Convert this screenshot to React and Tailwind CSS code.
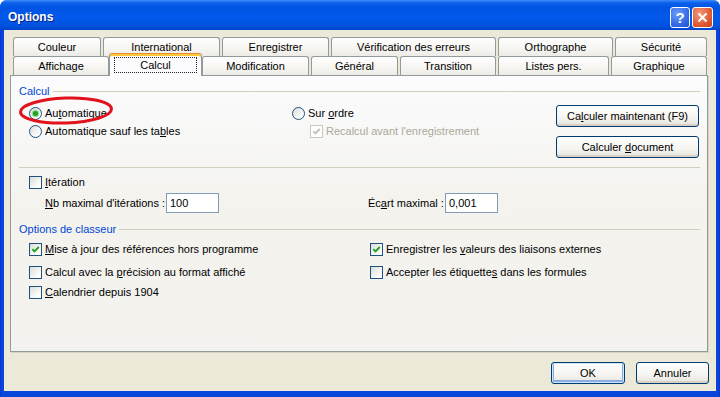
const F = "font-['Liberation_Sans',Arial,sans-serif]";

function U({ children }) {
  return <span className="underline decoration-1 underline-offset-[1px]">{children}</span>;
}

function Check({ checked, disabled }) {
  return (
    <span
      className={`flex h-[13px] w-[13px] shrink-0 items-center justify-center border ${
        disabled
          ? "border-[#CAC8BB] bg-white"
          : "border-[#1C5180] bg-[linear-gradient(135deg,#DCDCD7,#FFFFFF_80%)]"
      }`}
    >
      {checked && (
        <svg width="9" height="9" viewBox="0 0 9 9">
          <path
            d="M1.3 4.2 L3.5 6.5 L7.8 2"
            stroke={disabled ? "#C4C2B4" : "#21A121"}
            strokeWidth="1.9"
            fill="none"
          />
        </svg>
      )}
    </span>
  );
}

function Radio({ checked }) {
  return (
    <span className="flex h-[13px] w-[13px] shrink-0 items-center justify-center rounded-full border border-[#1C5180] bg-[linear-gradient(135deg,#DCDCD7,#FFFFFF_80%)]">
      {checked && (
        <span className="h-[5px] w-[5px] rounded-full bg-[#21A121] shadow-[0_0_1px_1px_#7CD67C]" />
      )}
    </span>
  );
}

function Btn({ children, className = "", def }) {
  return (
    <div
      className={`flex items-center justify-center rounded-[3px] border border-[#003C74] bg-[linear-gradient(to_bottom,#FFFFFF,#F5F4F0_60%,#E3E2DA)] text-black ${
        def
          ? "shadow-[inset_0_0_0_1px_#CEE7FF,inset_0_-1px_0_2px_#89ADE4]"
          : "shadow-[inset_0_-2px_0_#D6D0C5]"
      } ${className}`}
    >
      {children}
    </div>
  );
}

function Tab({ w, children }) {
  return (
    <div
      className={`flex h-[19px] ${w} shrink-0 items-center justify-center rounded-t-[3px] border border-b-0 border-[#919B9C] bg-[linear-gradient(to_bottom,#FFFFFF,#F6F5F1_60%,#ECEBE6)] text-black`}
    >
      {children}
    </div>
  );
}

function Group({ children }) {
  return (
    <div className="flex h-[13px] items-center">
      <span className="text-[#0046D5]">{children}</span>
      <span className="ml-[3px] h-px flex-1 bg-[#D0D0BF]" />
    </div>
  );
}

function Row({ children, className = "" }) {
  return <div className={`flex h-[16px] items-center gap-[3px] ${className}`}>{children}</div>;
}

function Field({ value, w }) {
  return (
    <div className={`flex h-[20px] ${w} items-center border border-[#7F9DB9] bg-white pl-[3px]`}>
      {value}
    </div>
  );
}

export default function App() {
  return (
    <div className={`h-[397px] w-[720px] bg-white text-[11px] leading-[13px] ${F}`}>
      <div className="flex h-full flex-col overflow-hidden rounded-t-[7px] bg-[linear-gradient(to_right,#0831D9,#0846DB_2px,#0846DB_calc(100%-2px),#0831D9)]">
        {/* title bar */}
        <div className="flex h-[30px] shrink-0 items-center bg-[linear-gradient(to_bottom,#3D8CFB,#0A5FEB_10%,#0054E3_25%,#0259EC_55%,#0053E0_85%,#0044CC)] pl-[8px] pr-[7px] pt-[4px]">
          <span className="text-[12px] font-bold text-white [text-shadow:1px_1px_0_#0A1E7A]">Options</span>
          <div className="ml-auto flex gap-[2px]">
            <div className="flex h-[21px] w-[20px] items-center justify-center rounded-[3px] border border-white bg-[radial-gradient(circle_at_35%_30%,#6C9EF8,#2C64E3_70%,#1E4FC8)] text-[15px] font-bold text-white">
              ?
            </div>
            <div className="flex h-[21px] w-[21px] items-center justify-center rounded-[3px] border border-white bg-[radial-gradient(circle_at_35%_30%,#F09A7C,#E0562E_65%,#C5431F)]">
              <svg width="11" height="11" viewBox="0 0 11 11">
                <path d="M1.5 1.5 L9.5 9.5 M9.5 1.5 L1.5 9.5" stroke="white" strokeWidth="2" />
              </svg>
            </div>
          </div>
        </div>

        {/* body */}
        <div className="mx-[4px] mb-[6px] flex flex-1 flex-col bg-[#ECE9D8]">
          {/* tabs */}
          <div className="mt-[7px] flex flex-col">
            <div className="flex h-[19px] gap-[2px] pl-[9px]">
              <Tab w="w-[88px]">Couleur</Tab>
              <Tab w="w-[117px]">International</Tab>
              <Tab w="w-[107px]">Enregistrer</Tab>
              <Tab w="w-[165px]">Vérification des erreurs</Tab>
              <Tab w="w-[115px]">Orthographe</Tab>
              <Tab w="w-[92px]">Sécurité</Tab>
            </div>
            <div className="relative z-10 flex h-[19px] items-start gap-[2px] pl-[9px]">
              <Tab w="w-[96px]">Affichage</Tab>
              <div className="-mx-[2px] -mt-[3px] flex h-[23px] w-[93px] shrink-0 justify-center rounded-t-[3px] border border-b-0 border-[#919B9C] border-t-[#E68B2C] bg-[#FCFCFE] shadow-[inset_0_2px_0_#FFC73C]">
                <div className="mt-[3px] flex h-[16px] w-[83px] items-center justify-center border border-dotted border-[#222]">
                  Calcul
                </div>
              </div>
              <Tab w="w-[107px]">Modification</Tab>
              <Tab w="w-[87px]">Général</Tab>
              <Tab w="w-[96px]">Transition</Tab>
              <Tab w="w-[111px]">Listes pers.</Tab>
              <Tab w="w-[96px]">Graphique</Tab>
            </div>
          </div>

          {/* panel */}
          <div className="relative ml-[6px] h-[277px] w-[698px] border border-[#919B9C] bg-[linear-gradient(to_bottom,#FCFCFE,#F4F3EE_45%,#F3F2EE)] pl-[8px] pr-[7px] pt-[9px] text-black shadow-[1px_1px_0_#D6D3C4]">
            <Group>Calcul</Group>

            <div className="mt-[7px] flex">
              <div className="ml-[10px] flex w-[263px] flex-col gap-[2px]">
                <Row>
                  <Radio checked />
                  <span>
                    Au<U>t</U>omatique
                  </span>
                </Row>
                <Row>
                  <Radio />
                  <span>
                    Automatique sauf les ta<U>b</U>les
                  </span>
                </Row>
              </div>
              <div className="flex w-[264px] flex-col gap-[2px]">
                <Row>
                  <Radio />
                  <span>
                    Sur <U>o</U>rdre
                  </span>
                </Row>
                <Row className="pl-[18px] text-[#ACA899]">
                  <Check checked disabled />
                  <span>Recalcul avant l'enregistrement</span>
                </Row>
              </div>
              <div className="flex w-[143px] flex-col gap-[9px]">
                <Btn className="h-[22px]">
                  <span>
                    Ca<U>l</U>culer maintenant (F9)
                  </span>
                </Btn>
                <Btn className="h-[22px]">
                  <span>
                    Calculer <U>d</U>ocument
                  </span>
                </Btn>
              </div>
            </div>

            <div className="mt-[9px] h-px bg-[#D0D0BF]" />

            <Row className="ml-[10px] mt-[6px]">
              <Check />
              <span>
                <U>I</U>tération
              </span>
            </Row>
            <div className="ml-[26px] mt-[3px] flex h-[20px] items-center">
              <span className="w-[121px]">
                <U>N</U>b maximal d'itérations :
              </span>
              <Field value="100" w="w-[53px]" />
              <span className="ml-[149px] w-[77px]">
                Éc<U>a</U>rt maximal :
              </span>
              <Field value="0,001" w="w-[53px]" />
            </div>

            <div className="mt-[10px]">
              <Group>Options de classeur</Group>
            </div>

            <div className="ml-[10px] mt-[5px] flex">
              <Row className="w-[341px]">
                <Check checked />
                <span>
                  <U>M</U>ise à jour des références hors programme
                </span>
              </Row>
              <Row>
                <Check checked />
                <span>
                  Enregistrer les <U>v</U>aleurs des liaisons externes
                </span>
              </Row>
            </div>
            <div className="ml-[10px] mt-[7px] flex">
              <Row className="w-[341px]">
                <Check />
                <span>
                  Calcul avec la <U>p</U>récision au format affiché
                </span>
              </Row>
              <Row>
                <Check />
                <span>
                  Accepter les étiquette<U>s</U> dans les formules
                </span>
              </Row>
            </div>
            <Row className="ml-[10px] mt-[4px]">
              <Check />
              <span>
                <U>C</U>alendrier depuis 1904
              </span>
            </Row>

            {/* red annotation ellipse */}
            <svg
              className="absolute left-[7px] top-[19px]"
              width="96"
              height="31"
              viewBox="0 0 96 31"
            >
              <ellipse
                cx="48"
                cy="15.5"
                rx="45.5"
                ry="12.5"
                transform="rotate(-2 48 15.5)"
                fill="none"
                stroke="#E2121C"
                strokeWidth="3"
              />
            </svg>
          </div>

          {/* dialog buttons */}
          <div className="mr-[7px] mt-[10px] flex justify-end gap-[11px]">
            <Btn def className="h-[22px] w-[74px]">
              OK
            </Btn>
            <Btn className="h-[22px] w-[73px]">Annuler</Btn>
          </div>
        </div>
      </div>
    </div>
  );
}
